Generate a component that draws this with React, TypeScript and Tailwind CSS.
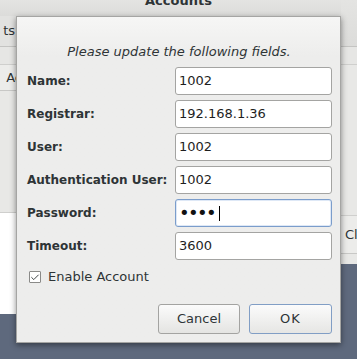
import { Check } from "lucide-react";

const FONT = "font-['DejaVu_Sans',sans-serif]";

const FIELDS = [
  { label: "Name:", value: "1002" },
  { label: "Registrar:", value: "192.168.1.36" },
  { label: "User:", value: "1002" },
  { label: "Authentication User:", value: "1002" },
  { label: "Password:", value: "", password: true },
  { label: "Timeout:", value: "3600" },
];

export default function App() {
  return (
    <main className={`relative w-[357px] h-[359px] overflow-hidden bg-[#5e697d] ${FONT} text-[13px] text-[#2e3436]`}>
      {/* window behind the dialog */}
      <div className="flex h-full">
        <div className="w-[16px] flex flex-col">
          <div className="h-[16px] bg-gradient-to-b from-[#e4e4e2] to-[#dcdcda]" />
          <div className="h-[31px] bg-[#e2e2e0] border-b border-[#c4c4c2] flex items-center justify-end overflow-hidden">
            <span className="whitespace-nowrap mr-[1px]">ts</span>
          </div>
          <div className="h-[18px] bg-[#e6e6e4] border-b border-[#cfcfcd]" />
          <div className="h-[26px] bg-[#ececea] border-b border-[#c8c8c6] flex items-center justify-end overflow-hidden">
            <span className="whitespace-nowrap -mr-[6px]">Ac</span>
          </div>
          <div className="h-[122px] bg-[#e8e8e6] border-b border-[#cfcfcd]" />
          <div className="h-[101px] bg-white" />
        </div>
        <div className="w-[325px] flex flex-col">
          <div className="h-[16px] bg-gradient-to-b from-[#e4e4e2] to-[#dcdcda] flex justify-center">
            <span className="font-bold -mt-[9px]">Accounts</span>
          </div>
        </div>
        <div className="w-[16px] flex flex-col">
          <div className="h-[47px] bg-gradient-to-b from-[#e4e4e2] to-[#dcdcda] border-b border-[#c4c4c2]" />
          <div className="h-[18px] bg-[#e6e6e4] border-b border-[#cfcfcd]" />
          <div className="h-[151px] bg-[#e8e8e6] border-b border-[#cfcfcd]" />
          <div className="h-[38px] bg-[#ececea] border-b border-[#c8c8c6] flex items-center overflow-hidden">
            <span className="whitespace-nowrap ml-[4px]">Cl</span>
          </div>
          <div className="h-[10px] bg-[#e8e8e6]" />
        </div>
      </div>

      {/* dialog */}
      <section className="absolute left-[16px] top-[16px] w-[325px] h-[327px] bg-gradient-to-b from-[#f6f6f5] via-[#ededec] via-[12%] to-[#ededec] border border-[#a5a5a3] shadow-[0_2px_6px_rgba(0,0,0,0.45)] flex flex-col pl-[9px] pr-[8px]">
        <p className="mt-[27px] h-[16px] leading-[16px] italic text-center text-[#2e3436]">
          Please update the following fields.
        </p>
        <div className="mt-[7px] grid grid-cols-[149px_157px] gap-y-[5px]">
          {FIELDS.map((f) => (
            <FieldRow key={f.label} {...f} />
          ))}
        </div>
        <label className="mt-[11px] ml-[3px] flex items-center gap-[7px] h-[12px]">
          <span className="w-[12px] h-[12px] border border-[#8a8a88] bg-white rounded-[1px] flex items-center justify-center">
            <Check size={11} strokeWidth={2.2} className="text-[#2e3436]" />
          </span>
          <span className="leading-[14px]">Enable Account</span>
        </label>
        <div className="mt-[21px] flex justify-end gap-[9px]">
          <button className="w-[82px] h-[30px] rounded-[3px] border border-[#a3a3a1] bg-gradient-to-b from-[#fbfbfb] to-[#e4e4e2] text-[13px] text-[#2e3436]">
            Cancel
          </button>
          <button className="w-[83px] h-[30px] rounded-[3px] border border-[#819ec5] bg-gradient-to-b from-[#fbfbfb] to-[#e6e6e4] text-[13px] text-[#2e3436] tracking-[1px]">
            OK
          </button>
        </div>
      </section>
    </main>
  );
}

function FieldRow(props: { label: string; value: string; password?: boolean }) {
  return (
    <>
      <div className="h-[28px] flex items-center pl-[1px] text-[12px] font-bold text-[#2e3436] whitespace-nowrap">
        {props.label}
      </div>
      <div
        className={`h-[28px] rounded-[3px] bg-white flex items-center pl-[3px] ${
          props.password ? "border border-[#7b9dcb] shadow-[inset_0_0_0_1px_rgba(160,190,230,0.35)]" : "border border-[#a4a4a2]"
        }`}
      >
        {props.password ? (
          <>
            <span className="text-[18px] leading-[18px] tracking-[-1.6px] text-[#111]">••••</span>
            <span className="ml-[4px] w-[1px] h-[15px] bg-black" />
          </>
        ) : (
          <span className="text-[#1e1e1e]">{props.value}</span>
        )}
      </div>
    </>
  );
}
